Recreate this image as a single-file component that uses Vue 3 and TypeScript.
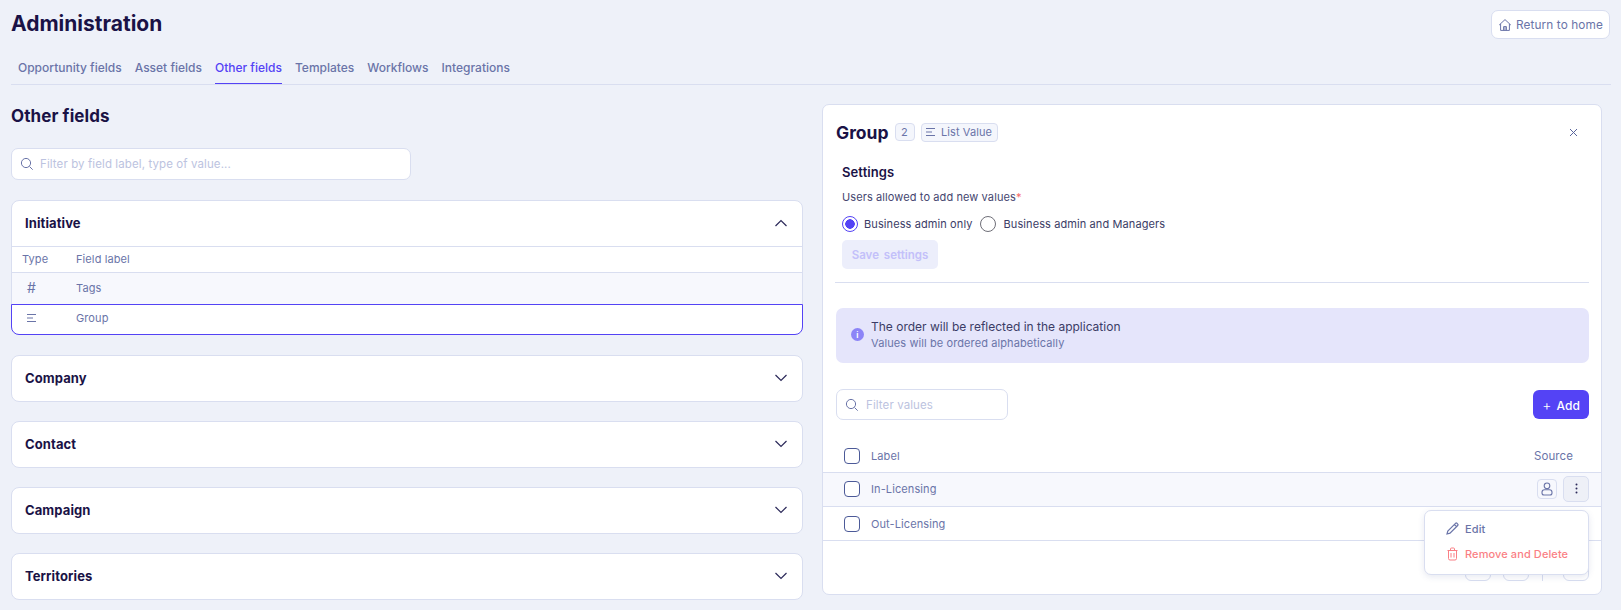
<script setup lang="ts">
const tabs = ['Opportunity fields', 'Asset fields', 'Other fields', 'Templates', 'Workflows', 'Integrations']
const collapsed = ['Company', 'Contact', 'Campaign', 'Territories']
</script>

<template>
  <div class="page">
    <header class="top">
      <h1>Administration</h1>
      <button class="home">
        <svg width="14" height="14" viewBox="0 0 14 14" fill="none" stroke="currentColor" stroke-width="1"><path d="M1.200 7 7 1.600 12.800 7M2.600 6v6.400h8.800V6M5.600 12.400V8.600h2.800v3.800M7 8.600v3.800"/></svg>
        Return to home
      </button>
    </header>
    <nav class="tabs">
      <a v-for="t in tabs" :key="t" :class="{ active: t === 'Other fields' }">{{ t }}</a>
    </nav>
    <main class="columns">
      <section class="left">
        <h2>Other fields</h2>
        <div class="search wide">
          <svg width="14" height="14" viewBox="0 0 14 14" fill="none" stroke="currentColor" stroke-width="1"><circle cx="6" cy="6" r="4.600"/><path d="m9.500 9.500 3.200 3.200"/></svg>
          <span>Filter by field label, type of value...</span>
        </div>
        <div class="card">
          <div class="card-head open">
            <span>Initiative</span>
            <svg width="14" height="8" viewBox="0 0 14 8" fill="none" stroke="#2c2a5a" stroke-width="1.200"><path d="m1.500 7 5.500-5.500L12.500 7"/></svg>
          </div>
          <div class="row thead"><span class="c-type">Type</span><span>Field label</span></div>
          <div class="row tags"><span class="c-type ico hash">#</span><span>Tags</span></div>
          <div class="row group">
            <span class="c-type ico">
              <svg width="10" height="8" viewBox="0 0 10 8" fill="none" stroke="currentColor"><path d="M0 .5h9M0 4h6M0 7.500h9"/></svg>
            </span>
            <span>Group</span>
          </div>
        </div>
        <div v-for="c in collapsed" :key="c" class="card closed">
          <div class="card-head">
            <span>{{ c }}</span>
            <svg width="14" height="8" viewBox="0 0 14 8" fill="none" stroke="#2c2a5a" stroke-width="1.200"><path d="m1.500 1 5.500 5.500L12.500 1"/></svg>
          </div>
        </div>
      </section>

      <aside class="panel">
        <div class="panel-head">
          <h3>Group</h3>
          <span class="chip num">2</span>
          <span class="chip list">
            <svg width="10" height="8" viewBox="0 0 10 8" fill="none" stroke="currentColor"><path d="M0 .5h9M0 4h6M0 7.500h9"/></svg>
            List Value
          </span>
          <svg class="close" width="9" height="9" viewBox="0 0 9 9" fill="none" stroke="#5a669c"><path d="m1 1 7 7M8 1 1 8"/></svg>
        </div>
        <div class="settings">
          <h4>Settings</h4>
          <p class="allowed">Users allowed to add new values<i>*</i></p>
          <div class="radios">
            <span class="radio on"></span><span class="r-label">Business admin only</span>
            <span class="radio"></span><span class="r-label">Business admin and Managers</span>
          </div>
          <button class="save">Save settings</button>
        </div>
        <hr />
        <div class="info">
          <span class="info-dot">i</span>
          <div>
            <p class="i1">The order will be reflected in the application</p>
            <p class="i2">Values will be ordered alphabetically</p>
          </div>
        </div>
        <div class="tools">
          <div class="search small">
            <svg width="14" height="14" viewBox="0 0 14 14" fill="none" stroke="currentColor" stroke-width="1"><circle cx="6" cy="6" r="4.600"/><path d="m9.500 9.500 3.200 3.200"/></svg>
            <span>Filter values</span>
          </div>
          <button class="add"><span class="plus">+</span> Add</button>
        </div>
        <div class="vrow vhead">
          <span class="check"></span><span class="v-label">Label</span><span class="source">Source</span>
        </div>
        <div class="vrow hover">
          <span class="check"></span><span class="v-label">In-Licensing</span>
          <span class="user">
            <svg width="12" height="14" viewBox="0 0 12 14" fill="none" stroke="currentColor" stroke-width="1.100"><circle cx="6" cy="3.800" r="2.800"/><path d="M3.500 7.800h5a2.500 2.500 0 0 1 2.500 2.500v.7a2 2 0 0 1-2 2H3a2 2 0 0 1-2-2v-.7a2.500 2.500 0 0 1 2.500-2.500z"/></svg>
          </span>
          <span class="kebab">
            <svg width="3" height="11" viewBox="0 0 3 11" fill="#2c2a5a"><circle cx="1.500" cy="1.500" r="1"/><circle cx="1.500" cy="5.500" r="1"/><circle cx="1.500" cy="9.500" r="1"/></svg>
          </span>
        </div>
        <div class="vrow last">
          <span class="check"></span><span class="v-label">Out-Licensing</span>
        </div>
        <div class="pager">
          <span class="pg"></span><span class="pg"></span><span class="sep"></span><span class="pg"></span>
        </div>
        <div class="menu">
          <div class="m-item">
            <svg width="13" height="13" viewBox="0 0 13 13" fill="none" stroke="currentColor" stroke-width="1.200"><path d="M1 12l.8-3L9.500 1.300a1 1 0 0 1 1.400 0l.8.8a1 1 0 0 1 0 1.400L4 11.200zM8.300 2.500l2.200 2.200"/></svg>
            Edit
          </div>
          <div class="m-item red">
            <svg width="13" height="14" viewBox="0 0 13 14" fill="none" stroke="currentColor"><path d="M1.500 3.500h10M4.500 3.500V2a1 1 0 0 1 1-1h2a1 1 0 0 1 1 1v1.500M2.500 3.500v8a1.500 1.500 0 0 0 1.500 1.500h5a1.500 1.500 0 0 0 1.500-1.500v-8M5 6v4.500M8 6v4.500"/></svg>
            Remove and Delete
          </div>
        </div>
      </aside>
    </main>
  </div>
</template>

<style>
html, body { margin: 0; background: #eef1f9; }
</style>

<style scoped>
* { box-sizing: border-box; }
.page {
  width: 1621px;
  height: 610px;
  overflow: hidden;
  padding: 0 10px 0 11px;
  background: #eef1f9;
  font-family: Inter, "Noto Sans", sans-serif;
  color: #6a74a8;
  font-size: 11.500px;
  letter-spacing: 0.1px;
}
p, h1, h2, h3, h4 { margin: 0; }
.top { display: flex; justify-content: space-between; align-items: flex-start; height: 57px; }
h1 { font-size: 21px; line-height: 24px; margin-top: 12px; font-weight: 700; color: #1a1246; letter-spacing: 0; }
.home {
  margin-top: 10px; margin-right: 1px;
  width: 119px; height: 29px; padding: 0;
  display: flex; align-items: center; justify-content: center; gap: 4px;
  white-space: nowrap;
  background: #fff; border: 1px solid #d9def0; border-radius: 7px;
  color: #6a74a8; font: 400 11.800px Inter, sans-serif; letter-spacing: 0.1px;
}
.tabs { display: flex; gap: 13px; padding-left: 7px; height: 28px; border-bottom: 1px solid #d9def0; }
.tabs a { height: 27px; line-height: 22px; font-size: 12px; font-weight: 500; white-space: nowrap; letter-spacing: 0; }
.tabs a.active { color: #5443f5; border-bottom: 1px solid #5443f5; }
.columns { display: flex; align-items: flex-start; gap: 19px; padding-top: 19px; }
.left { width: 792px; flex: none; }
h2 { font-size: 17px; line-height: 24px; font-weight: 700; color: #1a1246; margin-bottom: 1px; }
.search {
  display: flex; align-items: center; gap: 6px;
  background: #fff; border: 1px solid #d9def0; border-radius: 7px;
  color: #6a74a8; padding-left: 8px;
}
.search span { color: #bcc3e0; font-size: 11.500px; }
.wide { width: 400px; height: 32px; margin: 20px 0; }
.card { background: #fff; border: 1px solid #d9def0; border-radius: 8px; margin-bottom: 20px; }
.card.closed { margin-bottom: 19px; }
.card-head {
  height: 45px; display: flex; align-items: center; justify-content: space-between;
  padding: 0 14px 2px 13px; font-size: 13px; font-weight: 700; color: #1a1246;
}
.card-head.open { height: 46px; border-bottom: 1px solid #d9def0; }
.row { display: flex; align-items: center; font-size: 11px; }
.c-type { width: 64px; padding-left: 10px; flex: none; }
.thead { height: 25px; padding-bottom: 2px; }
.tags { height: 32px; background: #f7f8fd; border-top: 1px solid #d9def0; padding-bottom: 2px; }
.ico { padding-left: 15px; }
.hash { font-size: 14px; }
.group { height: 31px; margin: 0 -1px -1px; border: 1px solid #5443f5; border-radius: 0 0 8px 8px; background: #fff; padding-bottom: 3px; }
.panel {
  position: relative; width: 780px; height: 491px; flex: none;
  background: #fff; border: 1px solid #d9def0; border-radius: 7px;
}
.panel-head { display: flex; align-items: center; height: 36px; margin-top: 9px; padding-left: 13px; position: relative; }
h3 { font-size: 17.500px; font-weight: 700; color: #1a1246; letter-spacing: 0; }
.chip {
  display: inline-flex; align-items: center; justify-content: center; gap: 5px;
  height: 18px; background: #f4f6fc; border: 1px solid #d9def0; border-radius: 4px; font-size: 11px;
}
.num { width: 20px; margin-left: 6px; }
.list { width: 77px; margin-left: 6px; height: 19px; }
.close { position: absolute; right: 23px; top: 14px; }
.settings { padding: 13px 0 0 19px; }
h4 { font-size: 13px; line-height: 18px; font-weight: 600; color: #1a1246; }
.allowed { margin-top: 8px; line-height: 16px; font-size: 11px; color: #45466f; }
.allowed i { color: #f56a6a; font-style: normal; }
.radios { display: flex; align-items: center; margin-top: 11px; height: 16px; color: #3b3c66; font-size: 11px; }
.radio { width: 16px; height: 16px; border-radius: 50%; border: 1.500px solid #6f6f78; flex: none; }
.radio.on { border-color: #5443f5; background: radial-gradient(circle, #5443f5 0 4.500px, #fff 5px); }
.r-label { margin: 0 7px 0 6px; }
.radios .r-label:last-child { margin-left: 8px; }
.save {
  display: block; margin-top: 8px; width: 96px; height: 29px;
  background: #eceefb; border: 0; border-radius: 5px;
  color: #c3c0fa; font: 600 11.500px Inter, sans-serif; word-spacing: 2px;
}
hr { border: 0; border-top: 1px solid #d9def0; margin: 13px 12px 0; }
.info {
  display: flex; align-items: center; gap: 6px; height: 55px; margin: 25px 12px 0 13px;
  padding: 0 0 2px 15px; background: #e5e5fb; border-radius: 7px;
}
.info-dot {
  width: 13px; height: 13px; border-radius: 50%; background: #8c84f7; color: #fff;
  font-size: 8px; font-weight: 700; display: flex; align-items: center; justify-content: center; margin-right: 1px;
}
.i1 { font-size: 12px; line-height: 16px; color: #3b3c66; letter-spacing: 0; }
.i2 { font-size: 11px; line-height: 16px; color: #6a74a8; }
.tools { display: flex; justify-content: space-between; align-items: center; margin: 26px 12px 0 13px; }
.small { width: 172px; height: 31px; gap: 7px; }
.small span { font-size: 11.500px; }
.add {
  width: 56px; height: 29px; border: 0; border-radius: 6px; background: #5443f5; color: #fff;
  font: 500 12px Inter, sans-serif;
}
.plus { font-weight: 300; font-size: 14px; margin-right: 2px; }
.vrow { display: flex; align-items: center; height: 34px; padding-left: 21px; font-size: 11px; border-bottom: 1px solid #d9def0; position: relative; }
.vhead { height: 36px; margin-top: 17px; padding-top: 2px; }
.hover { height: 34px; background: #f7f8fd; padding-bottom: 2px; }
.last { height: 34px; }
.check { width: 16px; height: 16px; border-radius: 4px; border: 1.300px solid #4c5a98; background: #fff; flex: none; }
.v-label { margin-left: 11px; }
.source { position: absolute; right: 28px; font-size: 11.500px; }
.user {
  position: absolute; right: 44px; width: 20px; height: 20px;
  display: flex; align-items: center; justify-content: center;
  border: 1px solid #d9def0; border-radius: 4px;
}
.kebab {
  position: absolute; right: 12px; width: 26px; height: 26px;
  display: flex; align-items: center; justify-content: center;
  background: #eef0f7; border: 1px solid #d9def0; border-radius: 5px;
}
.pager { display: flex; justify-content: flex-end; align-items: flex-start; gap: 12px; padding: 14px 12px 0 0; }
.pg { width: 26px; height: 26px; border: 1px solid #d9def0; border-radius: 6px; }
.sep { width: 1px; height: 26px; margin: 0 8px 0 1px; background: #d9def0; }
.menu {
  position: absolute; right: 12px; top: 405px; width: 165px; height: 65px;
  background: #fff; border: 1px solid #d9def0; border-radius: 7px;
  box-shadow: 0 2px 6px rgba(60, 70, 140, 0.12);
  padding: 5px 0 0 21px;
}
.m-item { display: flex; align-items: center; gap: 6px; height: 25.500px; font-size: 11px; font-weight: 500; }
.m-item.red { color: #fa7f85; }
</style>
